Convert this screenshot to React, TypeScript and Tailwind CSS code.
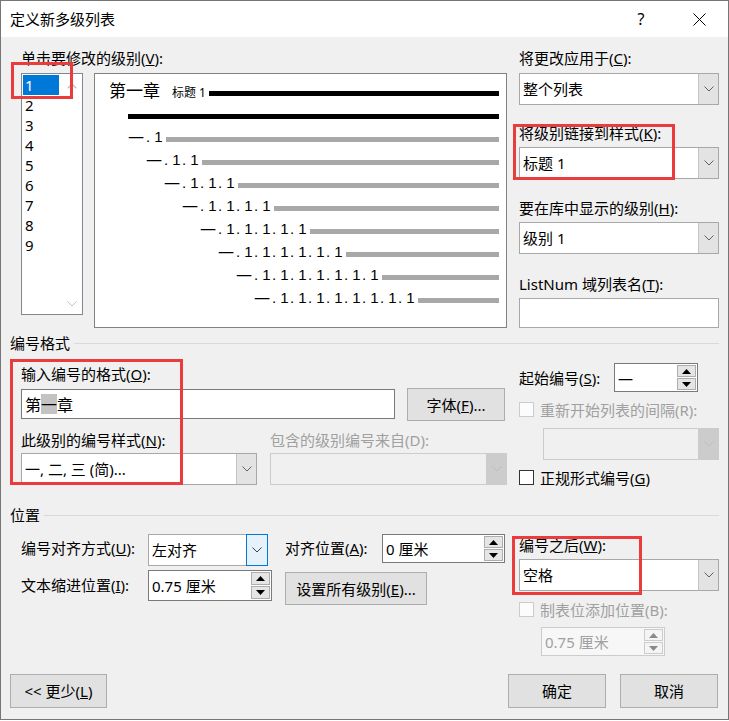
import React from "react";

const Chevron = ({ c = "#606060" }: { c?: string }) => (
  <svg width="10" height="6" viewBox="0 0 10 6">
    <path d="M0.5 0.5 L5 5 L9.5 0.5" fill="none" stroke={c} strokeWidth="1" />
  </svg>
);

const ChevronUp = ({ c = "#c2c2c2" }: { c?: string }) => (
  <svg width="10" height="6" viewBox="0 0 10 6">
    <path d="M0.8 5.2 L5 1 L9.2 5.2" fill="none" stroke={c} strokeWidth="1.5" />
  </svg>
);

const Tri = ({ up, c = "#000" }: { up?: boolean; c?: string }) => (
  <svg width="9" height="5" viewBox="0 0 9 5">
    {up ? <path d="M0 5 L4.5 0 L9 5 Z" fill={c} /> : <path d="M0 0 L4.5 5 L9 0 Z" fill={c} />}
  </svg>
);

function Label({ children, className = "", disabled }: { children: React.ReactNode; className?: string; disabled?: boolean }) {
  return (
    <div className={`h-[20px] whitespace-nowrap text-[15px] leading-[20px] ${disabled ? "text-[#a0a0a0]" : "text-black"} ${className}`}>
      {children}
    </div>
  );
}

function Combo({ text, className = "", focused, disabled }: { text?: string; className?: string; focused?: boolean; disabled?: boolean }) {
  return (
    <div className={`flex h-[32px] border ${disabled ? "border-[#cccccc] bg-[#f0f0f0]" : "border-[#a8a8a8] bg-white"} ${className}`}>
      <div className="flex flex-1 items-center pl-[3px] text-[15px] leading-[20px] whitespace-nowrap">{text}</div>
      {focused ? (
        <div className="-my-px -mr-px flex w-[22px] items-center justify-center border border-[#0078d7] bg-[#e5f1fb]">
          <Chevron c="#404040" />
        </div>
      ) : disabled ? (
        <div className="flex w-[20px] items-center justify-center border-l border-[#cccccc] bg-[#cccccc]">
          <Chevron c="#bdbdbd" />
        </div>
      ) : (
        <div className="flex w-[20px] items-center justify-center border-l border-[#c4c4c4] bg-[#e3e3e3]">
          <Chevron />
        </div>
      )}
    </div>
  );
}

function Spin({ text, className = "", disabled }: { text: string; className?: string; disabled?: boolean }) {
  return (
    <div className={`flex border ${disabled ? "border-[#cccccc] bg-[#f7f7f7] text-[#a0a0a0]" : "border-[#7a7a7a] bg-white text-black"} ${className}`}>
      <div className="flex flex-1 items-center pl-[3px] text-[15px] leading-[20px] whitespace-nowrap">{text}</div>
      <div className="flex w-[20px] flex-col gap-[1px] py-[1px] pr-[1px]">
        <div className={`flex flex-1 items-center justify-center border ${disabled ? "border-[#cccccc] bg-[#f4f4f4]" : "border-[#adadad] bg-[#e5e5e5]"}`}>
          <Tri up c={disabled ? "#8a8a8a" : "#000"} />
        </div>
        <div className={`flex flex-1 items-center justify-center border ${disabled ? "border-[#cccccc] bg-[#f4f4f4]" : "border-[#adadad] bg-[#e5e5e5]"}`}>
          <Tri c={disabled ? "#8a8a8a" : "#000"} />
        </div>
      </div>
    </div>
  );
}

function Btn({ children, className = "" }: { children: React.ReactNode; className?: string }) {
  return (
    <div className={`flex h-[34px] items-center justify-center border border-[#adadad] bg-[#e1e1e1] text-[15px] leading-[20px] whitespace-nowrap ${className}`}>
      {children}
    </div>
  );
}

function Check({ label, disabled }: { label: React.ReactNode; disabled?: boolean }) {
  return (
    <div className="flex h-[15px] items-center">
      <div className={`h-[15px] w-[15px] border ${disabled ? "border-[#cccccc] bg-[#fcfcfc]" : "border-[#333333] bg-white"}`} />
      <div className={`ml-[6px] whitespace-nowrap text-[15px] leading-[20px] ${disabled ? "text-[#a0a0a0]" : "text-black"}`}>{label}</div>
    </div>
  );
}

function Header({ text }: { text: string }) {
  return (
    <div className="flex h-[20px] items-center">
      <span className="text-[15px] leading-[20px]">{text}</span>
      <div className="ml-[4px] h-px flex-1 bg-[#d9d9d9]" />
    </div>
  );
}

const RedBox = ({ className }: { className: string }) => (
  <div className={`pointer-events-none absolute border-[3px] border-[#ea3b3d] ${className}`} />
);

export default function App() {
  const levels = [1, 2, 3, 4, 5, 6, 7, 8];
  return (
    <div className="relative flex h-[720px] w-[729px] flex-col border border-[#767676] bg-[#f0f0f0] font-['Noto_Sans','Noto_Sans_CJK_SC',sans-serif] text-black">
      {/* Title bar */}
      <div className="flex h-[36px] items-center bg-white pl-[9px]">
        <span className="text-[15px] leading-[20px]">定义新多级列表</span>
        <div className="ml-auto flex h-full">
          <div className="flex w-[58px] items-center justify-center text-[16px]">?</div>
          <div className="flex w-[58px] items-center justify-center">
            <svg width="13" height="13" viewBox="0 0 13 13">
              <path d="M0.5 0.5 L12.5 12.5 M12.5 0.5 L0.5 12.5" stroke="#000" strokeWidth="1" fill="none" />
            </svg>
          </div>
        </div>
      </div>

      {/* Body */}
      <div className="flex flex-1 flex-col px-[9px] pt-[11px]">
        {/* Section 1 */}
        <div className="ml-[11px] flex">
          <div className="flex flex-col">
            <Label>
              单击要修改的级别(<u>V</u>):
            </Label>
            <div className="mt-[5px] flex items-start">
              {/* list box */}
              <div className="flex h-[242px] w-[62px] border border-[#828790] bg-white">
                <div className="flex-1 pl-[1px] pt-[1px]">
                  {[1, 2, 3, 4, 5, 6, 7, 8, 9].map((n) =>
                    n === 1 ? (
                      <div key={n} className="h-[20px] w-[36px] bg-[#0078d7] pl-[2px] text-[15px] leading-[20px] text-white">
                        {n}
                      </div>
                    ) : (
                      <div key={n} className="h-[20px] pl-[2px] text-[15px] leading-[20px]">
                        {n}
                      </div>
                    )
                  )}
                </div>
                <div className="flex w-[21px] flex-col items-center justify-between pb-[7px] pt-[9px]">
                  <ChevronUp />
                  <Chevron c="#c2c2c2" />
                </div>
              </div>
              {/* preview */}
              <div className="ml-[11px] h-[255px] w-[413px] border border-[#828282] bg-white pr-[7px] pt-[8px]">
                <div className="flex h-[23px] items-center pl-[14px]">
                  <span className="mb-[7px] text-[17px] leading-[20px] font-['Noto_Sans_CJK_SC',sans-serif]">第一章</span>
                  <span className="mb-[2px] ml-[12px] text-[12px] leading-[14px]">标题 1</span>
                  <div className="ml-[3px] h-[5px] flex-1 bg-black" />
                </div>
                <div className="flex h-[23px] items-center pl-[33px]">
                  <div className="h-[5px] flex-1 bg-black" />
                </div>
                {levels.map((lv, i) => (
                  <div key={lv} className="flex h-[23px] items-center" style={{ paddingLeft: 33 + 18 * i }}>
                    <span className="mb-[6px] flex h-[20px] items-center">
                      <span className="w-[18px] text-[16px] leading-[20px] font-['Noto_Sans_CJK_SC',sans-serif]">一</span>
                      {Array.from({ length: lv }).map((_, k) => (
                        <span key={k} className="w-[18px] whitespace-pre text-[15px] leading-[20px] font-['Liberation_Sans',sans-serif]">
                          . 1
                        </span>
                      ))}
                    </span>
                    <div className="ml-[2px] h-[5px] flex-1 bg-[#a8a8a8]" />
                  </div>
                ))}
              </div>
            </div>
          </div>
          <div className="ml-[12px] flex w-[200px] flex-col">
            <Label>
              将更改应用于(<u>C</u>):
            </Label>
            <Combo className="mt-[5px]" text="整个列表" />
            <Label className="mt-[18px]">
              将级别链接到样式(<u>K</u>):
            </Label>
            <Combo className="mt-[4px]" text="标题 1" />
            <Label className="mt-[19px]">
              要在库中显示的级别(<u>H</u>):
            </Label>
            <Combo className="mt-[4px]" text="级别 1" />
            <Label className="mt-[20px]">
              ListNum 域列表名(<u>T</u>):
            </Label>
            <div className="mt-[4px] h-[30px] border border-[#a8a8a8] bg-white" />
          </div>
        </div>

        {/* Section 2 header */}
        <div className="mt-[5px]">
          <Header text="编号格式" />
        </div>

        {/* Section 2 */}
        <div className="ml-[11px] flex">
          <div className="flex w-[486px] flex-col">
            <Label className="mt-[11px]">
              输入编号的格式(<u>O</u>):
            </Label>
            <div className="mt-[4px] flex items-start">
              <div className="mt-[1px] flex h-[30px] w-[374px] items-center border border-[#7a7a7a] bg-white pl-[3px] text-[16px] leading-[20px] font-['Noto_Sans_CJK_SC',sans-serif]">
                <span>第</span>
                <span className="bg-[#c3c3c3]">一</span>
                <span>章</span>
              </div>
              <Btn className="ml-[12px] w-[98px] !h-[33px]">
                字体(<u>F</u>)...
              </Btn>
            </div>
            <div className="mt-[9px] grid grid-cols-[236px_237px] gap-x-[13px]">
              <Label>
                此级别的编号样式(<u>N</u>):
              </Label>
              <Label disabled>包含的级别编号来自(D):</Label>
              <Combo className="mt-[3px]" text="一, 二, 三 (简)..." />
              <Combo className="mt-[3px]" disabled />
            </div>
          </div>
          <div className="ml-[12px] flex w-[200px] flex-col">
            <div className="mt-[10px] flex h-[29px] items-center">
              <Label className="w-[95px]">
                起始编号(<u>S</u>):
              </Label>
              <Spin className="h-[29px] w-[84px]" text="—" />
            </div>
            <div className="mt-[10px]">
              <Check disabled label="重新开始列表的间隔(R):" />
            </div>
            <Combo className="ml-[24px] mt-[11px]" disabled />
            <div className="mt-[10px]">
              <Check
                label={
                  <>
                    正规形式编号(<u>G</u>)
                  </>
                }
              />
            </div>
          </div>
        </div>

        {/* Section 3 header */}
        <div className="mt-[20px]">
          <Header text="位置" />
        </div>

        {/* Section 3 */}
        <div className="ml-[11px] flex">
          <div className="flex w-[486px] flex-col">
            <div className="mt-[9px] flex items-start">
              <Label className="mt-[4px] w-[127px]">
                编号对齐方式(<u>U</u>):
              </Label>
              <Combo className="w-[120px]" text="左对齐" focused />
              <Label className="ml-[17px] mt-[4px] w-[97px]">
                对齐位置(<u>A</u>):
              </Label>
              <Spin className="h-[29px] w-[123px]" text="0 厘米" />
            </div>
            <div className="mt-[4px] flex items-start">
              <Label className="mt-[5px] w-[127px]">
                文本缩进位置(<u>I</u>):
              </Label>
              <Spin className="h-[31px] w-[124px]" text="0.75 厘米" />
              <Btn className="ml-[13px] mt-[2px] w-[142px] !h-[33px]">
                设置所有级别(<u>E</u>)...
              </Btn>
            </div>
          </div>
          <div className="ml-[12px] flex w-[200px] flex-col">
            <Label className="mt-[10px]">
              编号之后(<u>W</u>):
            </Label>
            <Combo className="mt-[4px]" text="空格" />
            <div className="mt-[11px]">
              <Check disabled label="制表位添加位置(B):" />
            </div>
            <Spin className="ml-[22px] mt-[10px] h-[29px] w-[124px]" text="0.75 厘米" disabled />
          </div>
        </div>

        {/* Footer */}
        <div className="mt-[18px] flex">
          <Btn className="w-[97px]">
            &lt;&lt; 更少(<u>L</u>)
          </Btn>
          <Btn className="ml-auto w-[98px]">确定</Btn>
          <Btn className="ml-[14px] mr-[1px] w-[98px]">取消</Btn>
        </div>
      </div>

      {/* Annotation boxes */}
      <RedBox className="left-[10px] top-[61px] h-[37px] w-[62px]" />
      <RedBox className="left-[512px] top-[123px] h-[56px] w-[162px]" />
      <RedBox className="left-[9px] top-[358px] h-[126px] w-[173px]" />
      <RedBox className="left-[511px] top-[535px] h-[59px] w-[130px]" />
    </div>
  );
}
